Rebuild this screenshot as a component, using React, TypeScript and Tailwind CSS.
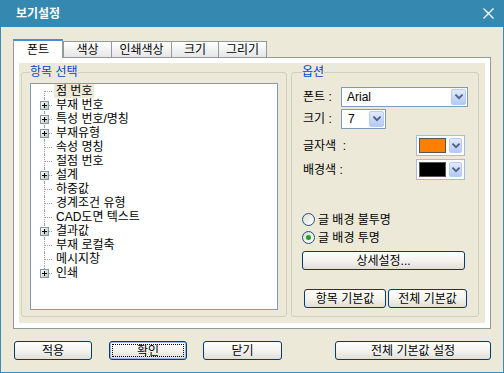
import React from "react";

const KR = "font-['Liberation_Sans','Noto_Sans_CJK_KR',sans-serif]";

const TREE: [string, boolean][] = [
  ["점 번호", false],
  ["부재 번호", true],
  ["특성 번호/명칭", true],
  ["부재유형", true],
  ["속성 명칭", false],
  ["절점 번호", false],
  ["설계", true],
  ["하중값", false],
  ["경계조건 유형", false],
  ["CAD도면 텍스트", false],
  ["결과값", true],
  ["부재 로컬축", false],
  ["메시지창", false],
  ["인쇄", true],
];

function Chevron() {
  return (
    <svg width="8" height="6" viewBox="0 0 8 6" fill="none" stroke="#4d6185" strokeWidth="1.8" strokeLinecap="square">
      <path d="M1 1.2 L4 4.2 L7 1.2" />
    </svg>
  );
}

function DropBtn({ w = "w-[15px]" }: { w?: string }) {
  return (
    <span className={`${w} h-full flex items-center justify-center rounded-[2px] border border-[#b8cbf4] bg-gradient-to-b from-[#e3ecfe] to-[#b4c9f7]`}>
      <Chevron />
    </span>
  );
}

function XpButton({ label, className, focus }: { label: string; className: string; focus?: boolean }) {
  return (
    <button
      className={`${className} flex items-center justify-center rounded-[3px] border border-[#003c74] bg-gradient-to-b from-white via-[#f4f3ee] to-[#e2e0d4] text-[12px] leading-none text-black ${KR} ${focus ? "shadow-[inset_0_0_0_1px_#9db9eb]" : ""}`}
    >
      {focus ? (
        <span className="flex h-[calc(100%-4px)] w-[calc(100%-4px)] items-center justify-center border border-dotted border-black">
          {label}
        </span>
      ) : (
        label
      )}
    </button>
  );
}

function PlusBox() {
  return (
    <span className="absolute left-[4px] top-[3px] flex h-[9px] w-[9px] items-center justify-center border border-[#7a98af] bg-gradient-to-br from-white to-[#c6c3b3]">
      <svg width="5" height="5" viewBox="0 0 5 5">
        <path d="M0 2.5 H5 M2.5 0 V5" stroke="#000" strokeWidth="1" />
      </svg>
    </span>
  );
}

function TreeRow({ label, plus, idx }: { label: string; plus: boolean; idx: number }) {
  const last = idx === TREE.length - 1;
  const first = idx === 0;
  return (
    <div className="flex h-[14px] items-center">
      <div className="relative ml-[5px] h-full w-[16px]">
        <span
          className={`absolute left-[8px] w-0 border-l border-dotted border-[#a0a0a0] ${first ? "top-[7px] bottom-0" : last ? "top-0 h-[7px]" : "top-0 bottom-0"}`}
        />
        <span className="absolute left-[8px] top-[7px] h-0 w-[8px] border-t border-dotted border-[#a0a0a0]" />
        {plus && <PlusBox />}
      </div>
      <span className={`ml-[2px] px-[2px] text-[12px] leading-[14px] text-black ${first ? "bg-[#ece9d8]" : ""}`}>{label}</span>
    </div>
  );
}

function Radio({ checked, label }: { checked?: boolean; label: string }) {
  return (
    <div className="flex h-[13px] items-center">
      <span className="flex h-[13px] w-[13px] items-center justify-center rounded-full border border-[#1c5180] bg-gradient-to-br from-[#dcdcd6] to-white">
        {checked && <span className="h-[5px] w-[5px] rounded-full bg-[#21a121]" />}
      </span>
      <span className="ml-[3px] text-[12px] leading-none text-black">{label}</span>
    </div>
  );
}

function ColorPick({ color }: { color: string }) {
  return (
    <div className="flex h-[21px] w-[49px] items-stretch border border-[#a7bbdc] bg-white p-[2px]">
      <span className="w-[27px] border border-[#555]" style={{ background: color }} />
      <span className="ml-auto flex">
        <DropBtn w="w-[13px]" />
      </span>
    </div>
  );
}

export default function App() {
  return (
    <div className={`flex h-[373px] w-[504px] flex-col ${KR}`}>
      {/* title bar */}
      <div className="flex h-[27px] shrink-0 items-center justify-between bg-[#3589b1] pl-[16px] pr-[10px]">
        <span className="text-[12px] font-bold leading-none text-white">보기설정</span>
        <svg width="11" height="11" viewBox="0 0 11 11" stroke="#fff" strokeWidth="1.3">
          <path d="M0.5 0.5 L10.5 10.5 M10.5 0.5 L0.5 10.5" />
        </svg>
      </div>

      <div className="flex flex-1 flex-col border-x border-b border-[#3a8cb6] bg-[#ece9d8] pl-[12px] pt-[12px]">
        {/* tabs */}
        <div className="flex h-[18px] items-end text-[12px] leading-none text-black">
          <div className="relative z-10 -mb-px flex h-[19px] w-[50px] items-center justify-center border-x border-t-[2px] border-x-[#919b9c] border-t-[#4a8ad6] bg-white pt-[1px]">
            폰트
          </div>
          {[
            ["색상", "w-[49px]"],
            ["인쇄색상", "w-[61px]"],
            ["크기", "w-[48px]"],
            ["그리기", "w-[49px]"],
          ].map(([t, w], i) => (
            <div
              key={t}
              className={`${w} ${i > 0 ? "-ml-px" : ""} flex h-[16px] items-center justify-center border-x border-t border-[#919b9c] bg-gradient-to-b from-white to-[#e6e6e6]`}
            >
              {t}
            </div>
          ))}
        </div>

        {/* panel */}
        <div className="h-[272px] w-[478px] border border-[#919b9c] bg-white p-[5px]">
          <div className="flex h-full gap-[4px] bg-[#ece9d8] pl-[2px] pt-[3px]">
            {/* left group */}
            <fieldset className="h-[251px] w-[266px] rounded-[3px] border border-[#d0d0bf] px-[8px]">
              <legend className="px-0 text-[12px] leading-[13px] text-[#0046d5]">항목 선택</legend>
              <div className="mt-[4px] h-[227px] w-[248px] border border-[#7f9db9] bg-white pt-[0px]">
                {TREE.map(([l, p], i) => (
                  <TreeRow key={l} label={l} plus={p} idx={i} />
                ))}
              </div>
            </fieldset>

            {/* right group */}
            <fieldset className="h-[251px] w-[188px] rounded-[3px] border border-[#d0d0bf] pl-[10px] text-[12px] leading-none text-black">
              <legend className="px-0 text-[12px] leading-[13px] text-[#0046d5]">옵션</legend>

              <div className="mt-[8px] flex h-[20px] items-center">
                <span className="w-[39px] pl-[1px]">폰트 :</span>
                <div className="flex h-[20px] w-[127px] items-stretch border border-[#7f9db9] bg-white p-px">
                  <span className="flex flex-1 items-center pl-[4px] text-[12px]">Arial</span>
                  <DropBtn />
                </div>
              </div>

              <div className="mt-[2px] flex h-[20px] items-center">
                <span className="w-[39px] pl-[1px]">크기 :</span>
                <div className="flex h-[20px] w-[45px] items-stretch border border-[#7f9db9] bg-white p-px">
                  <span className="flex flex-1 items-center pl-[5px] text-[12px]">7</span>
                  <DropBtn />
                </div>
              </div>

              <div className="mt-[6px] flex h-[21px] items-center">
                <span className="w-[114px] whitespace-pre pl-[1px]">글자색  :</span>
                <ColorPick color="#ff8000" />
              </div>

              <div className="mt-[3px] flex h-[21px] items-center">
                <span className="w-[114px] whitespace-pre pl-[1px]">배경색 :</span>
                <ColorPick color="#000000" />
              </div>

              <div className="mt-[33px]">
                <Radio label="글 배경 불투명" />
              </div>
              <div className="mt-[5px]">
                <Radio checked label="글 배경 투명" />
              </div>

              <XpButton label="상세설정..." className="mt-[7px] h-[19px] w-[163px]" />

              <div className="mt-[19px] flex gap-[2px] pl-[2px]">
                <XpButton label="항목 기본값" className="h-[19px] w-[82px]" />
                <XpButton label="전체 기본값" className="h-[19px] w-[79px]" />
              </div>
            </fieldset>
          </div>
        </div>

        {/* bottom buttons */}
        <div className="mt-[12px] flex">
          <XpButton label="적용" className="ml-[1px] h-[19px] w-[78px]" />
          <XpButton label="확인" focus className="ml-[17px] h-[19px] w-[78px]" />
          <XpButton label="닫기" className="ml-[16px] h-[19px] w-[79px]" />
          <XpButton label="전체 기본값 설정" className="ml-[53px] h-[19px] w-[156px]" />
        </div>
      </div>
    </div>
  );
}
